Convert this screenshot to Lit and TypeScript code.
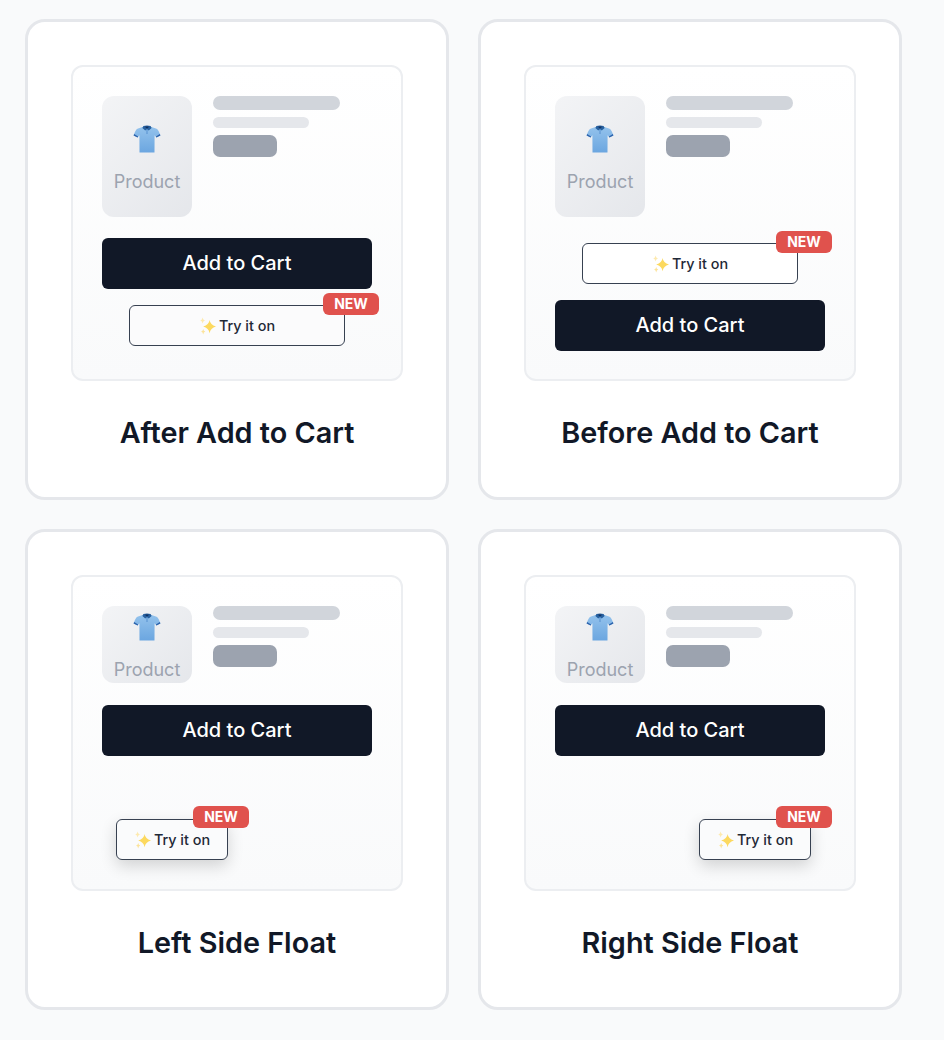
import { LitElement, html, css, svg } from "lit";
import { customElement } from "lit/decorators.js";

const shirt = html`<svg class="shirt" viewBox="0 0 28 28" aria-hidden="true">
  <defs><linearGradient id="sg" x1="0" y1="0" x2="0" y2="1"><stop offset="0" stop-color="#93c2ec"/><stop offset="1" stop-color="#6ba6e0"/></linearGradient></defs>
  <path d="M9.5 2 L18.5 2 L23.6 3.8 Q25.6 5 27.4 10.4 L23.4 12.6 L21.6 10.2 L21.5 27.6 L6.5 27.6 L6.4 10.2 L4.6 12.6 L.6 10.4 Q2.4 5 4.4 3.8 Z" fill="url(#sg)"/>
  <path d="M.6 10.4 L1.1 9 L5.2 11.4 L4.6 12.6 Z M27.4 10.4 L26.9 9 L22.8 11.4 L23.4 12.6 Z" fill="#2d63ab"/>
  <path d="M10.4 1 Q14 -.2 17.6 1 L18.6 3 L15.8 5.6 L14 4.2 L12.2 5.6 L9.4 3 Z" fill="#27609f"/>
  <path d="M11.8 1.8 Q14 1 16.2 1.8 L14 3.4 Z" fill="#10305f"/>
  <path d="M14 4.4 L14 9" stroke="#3f7ec6" stroke-width=".7"/>
</svg>`;

const sparkles = html`<svg class="spark" viewBox="0 0 18 18" aria-hidden="true">
  ${svg`<path d="M10.6 3 Q11.2 8 17 9.4 Q11.4 10.8 10.6 16.2 Q9.8 10.8 4.2 9.4 Q10 8 10.6 3 Z" fill="#fcd95f"/>
  <path d="M3.6 .6 Q3.9 3 5.9 3.6 Q3.9 4.2 3.6 6.6 Q3.3 4.2 1.3 3.6 Q3.3 3 3.6 .6 Z" fill="#fdeab0"/>
  <path d="M4.2 12 Q4.5 14 6.3 14.6 Q4.5 15.2 4.2 17.4 Q3.9 15.2 2.1 14.6 Q3.9 14 4.2 12 Z" fill="#fce39a"/>`}
</svg>`;

type Variant = "after" | "before" | "left" | "right";

@customElement("app-root")
export class AppRoot extends LitElement {
  static styles = css`
    :host {
      display: block;
      min-height: 1040px;
      box-sizing: border-box;
      background: #f9fafb;
      font-family: Inter, "Liberation Sans", sans-serif;
      color: #111827;
    }
    .grid {
      display: grid;
      grid-template-columns: 424px 424px;
      grid-auto-rows: 481px;
      gap: 29px;
      padding: 19px 0 0 25px;
    }
    .card {
      box-sizing: border-box;
      background: #fff;
      border: 3px solid #e5e7eb;
      border-radius: 20px;
      padding: 43px 43px 0;
      display: flex;
      flex-direction: column;
      align-items: center;
    }
    .mock {
      position: relative;
      box-sizing: border-box;
      width: 332px;
      height: 316px;
      border: 2px solid #eceef1;
      border-radius: 12px;
      background: linear-gradient(180deg, #ffffff 0%, #f9fafb 100%);
      padding: 29px 29px;
      display: flex;
      flex-direction: column;
    }
    .top {
      display: flex;
      gap: 21px;
      align-items: flex-start;
    }
    .thumb {
      box-sizing: border-box;
      width: 90px;
      height: 121px;
      flex: none;
      border-radius: 12px;
      background: linear-gradient(135deg, #f3f4f6, #e5e7eb);
      display: flex;
      flex-direction: column;
      align-items: center;
      padding-top: 29px;
      gap: 18px;
      color: #9ca3af;
      font-size: 18px;
      line-height: 22px;
    }
    .compact .thumb {
      height: 77px;
      padding-top: 7px;
    }
    .shirt {
      width: 28px;
      height: 28px;
      display: block;
    }
    .lines {
      display: flex;
      flex-direction: column;
    }
    .l1 {
      width: 127px;
      height: 14px;
      border-radius: 7px;
      background: #d1d5db;
    }
    .l2 {
      width: 96px;
      height: 11px;
      border-radius: 6px;
      background: #e5e7eb;
      margin-top: 7px;
    }
    .l3 {
      width: 64px;
      height: 22px;
      border-radius: 7px;
      background: #9ca3af;
      margin-top: 7px;
    }
    .cart {
      box-sizing: border-box;
      height: 51px;
      flex: none;
      padding-bottom: 2px;
      border-radius: 6px;
      background: #111827;
      color: #fff;
      font-size: 20px;
      font-weight: 500;
      display: flex;
      align-items: center;
      justify-content: center;
    }
    .try {
      position: relative;
      box-sizing: border-box;
      height: 41px;
      width: 216px;
      flex: none;
      align-self: center;
      border: 1px solid #374151;
      border-radius: 6px;
      background: #fff;
      color: #1f2937;
      font-size: 14.4px;
      font-weight: 500;
      display: flex;
      align-items: center;
      justify-content: center;
      gap: 2px;
    }
    .after .cart { margin-top: 21px; }
    .after .try { margin-top: 16px; background: #fbfbfc; }
    .before .try { margin-top: 26px; }
    .before .cart { margin-top: 16px; }
    .compact .cart { margin-top: 22px; }
    .float {
      position: absolute;
      top: 242px;
      width: 112px;
      background: #fafbfc;
      box-shadow: 0 6px 16px rgba(0, 0, 0, 0.16);
    }
    .left .float { left: 43px; }
    .right .float { right: 43px; }
    .spark {
      width: 18px;
      height: 18px;
      flex: none;
    }
    .badge {
      position: absolute;
      top: -13px;
      right: -35px;
      width: 56px;
      height: 22px;
      padding-bottom: 1px;
      box-sizing: border-box;
      border-radius: 6px;
      background: #e0524d;
      color: #fff;
      font-size: 14px;
      font-weight: 700;
      display: flex;
      align-items: center;
      justify-content: center;
    }
    .float .badge { right: -22px; top: -14px; }
    .title {
      margin: 34px 0 0;
      font-size: 28.8px;
      line-height: 36px;
      font-weight: 600;
      color: #111827;
    }
  `;

  private tryBtn(extra = "") {
    return html`<div class="try ${extra}">${sparkles}<span>Try it on</span><span class="badge">NEW</span></div>`;
  }

  private mock(v: Variant) {
    const compact = v === "left" || v === "right";
    const cart = html`<div class="cart">Add to Cart</div>`;
    return html`<div class="mock ${v} ${compact ? "compact" : ""}">
      <div class="top">
        <div class="thumb">${shirt}<span>Product</span></div>
        <div class="lines"><div class="l1"></div><div class="l2"></div><div class="l3"></div></div>
      </div>
      ${v === "after" ? html`${cart}${this.tryBtn()}` : ""}
      ${v === "before" ? html`${this.tryBtn()}${cart}` : ""}
      ${compact ? html`${cart}${this.tryBtn("float")}` : ""}
    </div>`;
  }

  render() {
    const items: [Variant, string][] = [
      ["after", "After Add to Cart"],
      ["before", "Before Add to Cart"],
      ["left", "Left Side Float"],
      ["right", "Right Side Float"],
    ];
    return html`<div class="grid">
      ${items.map(([v, t]) => html`<div class="card">${this.mock(v)}<h3 class="title">${t}</h3></div>`)}
    </div>`;
  }
}
